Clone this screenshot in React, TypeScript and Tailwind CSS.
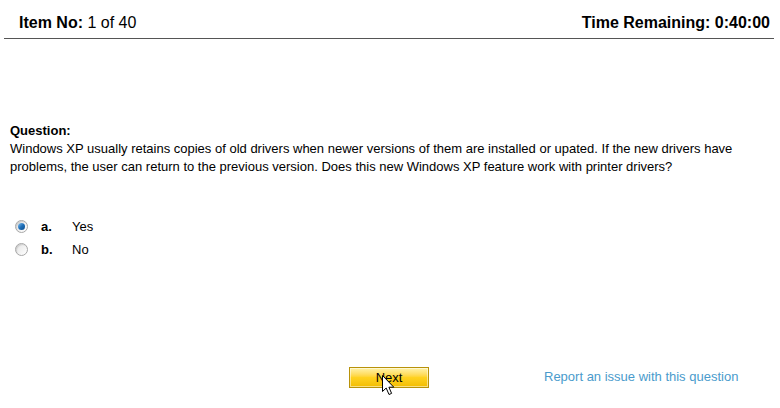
import React from "react";

function Radio({ checked }: { checked?: boolean }) {
  return (
    <div className="w-[13px] h-[13px] rounded-full border border-[#a8a8a8] bg-gradient-to-br from-[#e4e4e4] to-[#ffffff] flex items-center justify-center shadow-[inset_1px_1px_1px_rgba(0,0,0,0.12)]">
      {checked && (
        <div className="w-[7px] h-[7px] rounded-full bg-gradient-to-br from-[#7fbfee] via-[#1e6fb8] to-[#0b4a8a]" />
      )}
    </div>
  );
}

export default function App() {
  return (
    <div
      className="w-[780px] h-[408px] bg-white text-black overflow-hidden"
      style={{ fontFamily: '"Liberation Sans", Arial, sans-serif' }}
    >
      <div className="mx-[4px] w-[770px] border-b border-[#555555] pt-[14px] pb-[6px] flex justify-between items-center text-[16px] leading-[18px]">
        <div className="pl-[15px]">
          <span className="font-bold">Item No:</span> 1 of 40
        </div>
        <div className="pr-[4px] font-bold">Time Remaining: 0:40:00</div>
      </div>

      <div className="pl-[10px] pr-[40px] mt-[83px] text-[13px] leading-[18px]">
        <div className="font-bold">Question:</div>
        <div>
          Windows XP usually retains copies of old drivers when newer versions of them are installed or upated. If the new drivers have
          problems, the user can return to the previous version. Does this new Windows XP feature work with printer drivers?
        </div>
      </div>

      <div className="mt-[39px] text-[13px]">
        <div className="flex items-center h-[23px] pl-[15px]">
          <Radio checked />
          <span className="font-bold ml-[13px] w-[31px]">a.</span>
          <span>Yes</span>
        </div>
        <div className="flex items-center h-[23px] pl-[15px]">
          <Radio />
          <span className="font-bold ml-[13px] w-[31px]">b.</span>
          <span>No</span>
        </div>
      </div>

      <div className="mt-[104px] flex items-center">
        <div className="relative ml-[349px]">
          <button className="w-[80px] h-[21px] border border-[#b8920a] bg-gradient-to-b from-[#fff3a8] via-[#ffd21f] to-[#f2bd00] text-[13px] leading-[19px] text-black shadow-[inset_0_0_0_1px_rgba(255,255,255,0.5)]">
            Next
          </button>
          <svg
            className="absolute left-[33px] top-[10px]"
            width="13"
            height="21"
            viewBox="0 0 13 21"
          >
            <path
              d="M0.5 0.5 L0.5 16.5 L4.2 13 L7 19.5 L9.6 18.4 L6.9 12.2 L11.8 12.2 Z"
              fill="#ffffff"
              stroke="#000000"
              strokeWidth="1"
              strokeLinejoin="miter"
            />
          </svg>
        </div>
        <a className="ml-[115px] text-[13px] text-[#4a9bcc] cursor-pointer">
          Report an issue with this question
        </a>
      </div>
    </div>
  );
}
